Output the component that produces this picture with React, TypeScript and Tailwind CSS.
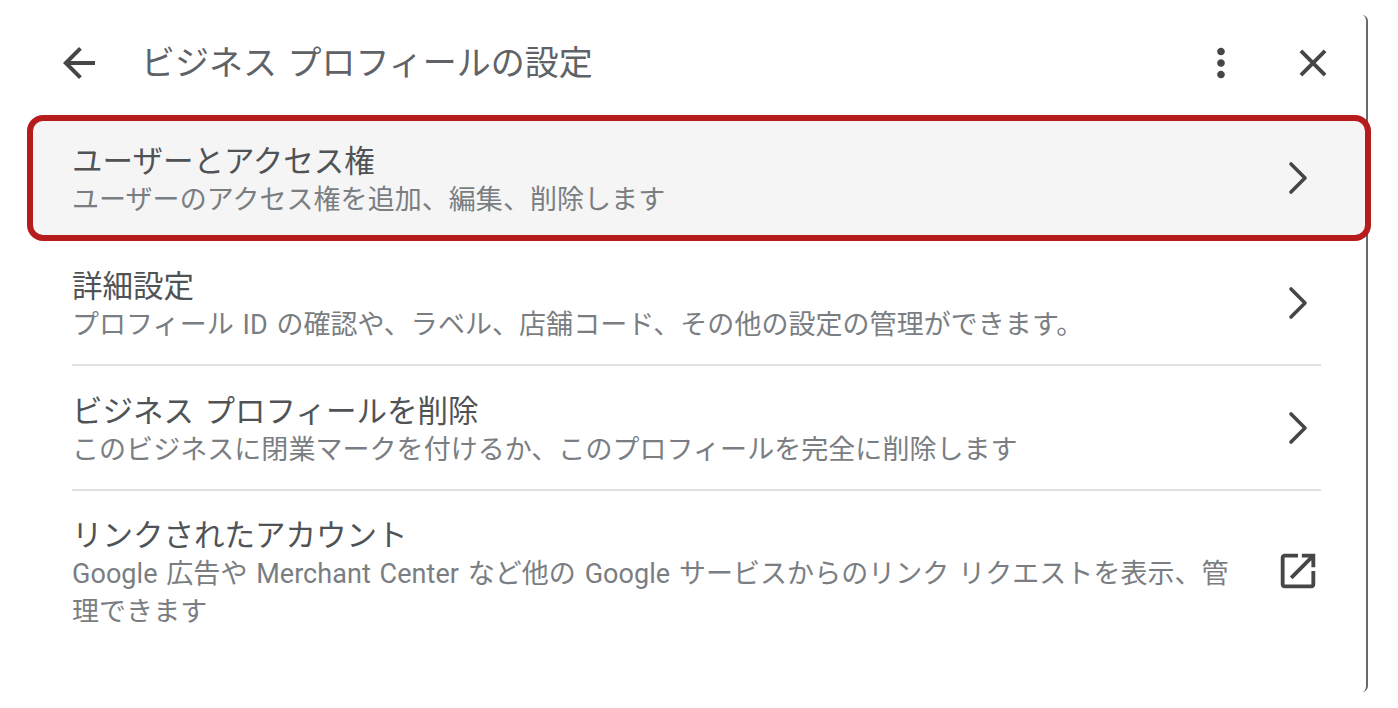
import React from 'react'

const iconColor = '#444746'

function Chevron() {
  return (
    <svg width="24" height="34" viewBox="0 0 24 34" className="shrink-0" fill="none" stroke={iconColor} strokeWidth="3.6" strokeLinecap="round" strokeLinejoin="round">
      <path d="M5 3l14 14L5 31" />
    </svg>
  )
}

function ExternalIcon() {
  return (
    <svg width="46" height="46" viewBox="0 0 24 24" className="shrink-0" fill={iconColor}>
      <path d="M19 19H5V5h7V3H5c-1.11 0-2 .9-2 2v14c0 1.1.89 2 2 2h14c1.1 0 2-.9 2-2v-7h-2v7zM14 3v2h3.59l-9.83 9.83 1.41 1.41L19 6.41V10h2V3h-7z" />
    </svg>
  )
}

interface RowProps {
  title: string;
  sub: string;
  icon?: React.ReactNode;
}

function RowText({ title, sub }: RowProps) {
  return (
    <div className="flex flex-col pt-[5px]">
      <p className="text-[30.5px] leading-[38px] [word-spacing:3px] text-[#505356]">{title}</p>
      <p className="text-[27px] leading-[38px] tracking-[0.05px] [word-spacing:2px] text-[#7a7e82]">{sub}</p>
    </div>
  )
}

function Row({ title, sub }: RowProps) {
  return (
    <div className="ml-[72px] w-[1249px] h-[125px] flex items-center justify-between border-b-2 border-[#dfe0e1] pr-[11px] pt-[1px]">
      <RowText title={title} sub={sub} />
      <Chevron />
    </div>
  )
}

export default function App() {
  return (
    <div className="w-full h-[708px] bg-white pt-[15px] overflow-hidden" style={{ fontFamily: 'Roboto, "Noto Sans CJK JP", sans-serif' }}>
      <div className="w-[1368px] h-[677px] border-r-2 border-[#666a6d] rounded-r-md">
        {/* header */}
        <div className="h-[95px] flex items-center pl-[55px] pr-[30px]">
          <svg width="48" height="48" viewBox="0 0 24 24" fill={iconColor}>
            <path d="M20 11H7.83l5.59-5.59L12 4l-8 8 8 8 1.41-1.41L7.83 13H20v-2z" />
          </svg>
          <h1 className="ml-[38px] text-[34px] leading-[46px] font-normal [word-spacing:2px] text-[#5f6367] flex-1">ビジネス プロフィールの設定</h1>
          <svg width="46" height="46" viewBox="0 0 24 24" fill={iconColor}>
            <path d="M12 8c1.1 0 2-.9 2-2s-.9-2-2-2-2 .9-2 2 .9 2 2 2zm0 2c-1.1 0-2 .9-2 2s.9 2 2 2 2-.9 2-2-.9-2-2-2zm0 6c-1.1 0-2 .9-2 2s.9 2 2 2 2-.9 2-2-.9-2-2-2z" />
          </svg>
          <svg className="ml-[46px]" width="46" height="46" viewBox="0 0 24 24" fill={iconColor}>
            <path d="M19 6.41L17.59 5 12 10.59 6.41 5 5 6.41 10.59 12 5 17.59 6.41 19 12 13.41 17.59 19 19 17.59 13.41 12z" />
          </svg>
        </div>

        {/* highlighted row */}
        <div className="mt-[5px] ml-[27px] w-[1344px] h-[126px] flex items-center justify-between border-[6px] border-[#b71c1c] rounded-[16px] bg-[#f5f5f5] pl-[39px] pr-[55px]">
          <RowText title="ユーザーとアクセス権" sub="ユーザーのアクセス権を追加、編集、削除します" />
          <Chevron />
        </div>

        <Row title="詳細設定" sub="プロフィール ID の確認や、ラベル、店舗コード、その他の設定の管理ができます。" />
        <Row title="ビジネス プロフィールを削除" sub="このビジネスに閉業マークを付けるか、このプロフィールを完全に削除します" />

        <div className="ml-[72px] w-[1249px] flex items-start justify-between pt-[21px]">
          <div className="w-[1160px]">
            <RowText title="リンクされたアカウント" sub="Google 広告や Merchant Center など他の Google サービスからのリンク リクエストを表示、管理できます" />
          </div>
          <div className="mt-[36px]">
            <ExternalIcon />
          </div>
        </div>
      </div>
    </div>
  )
}
